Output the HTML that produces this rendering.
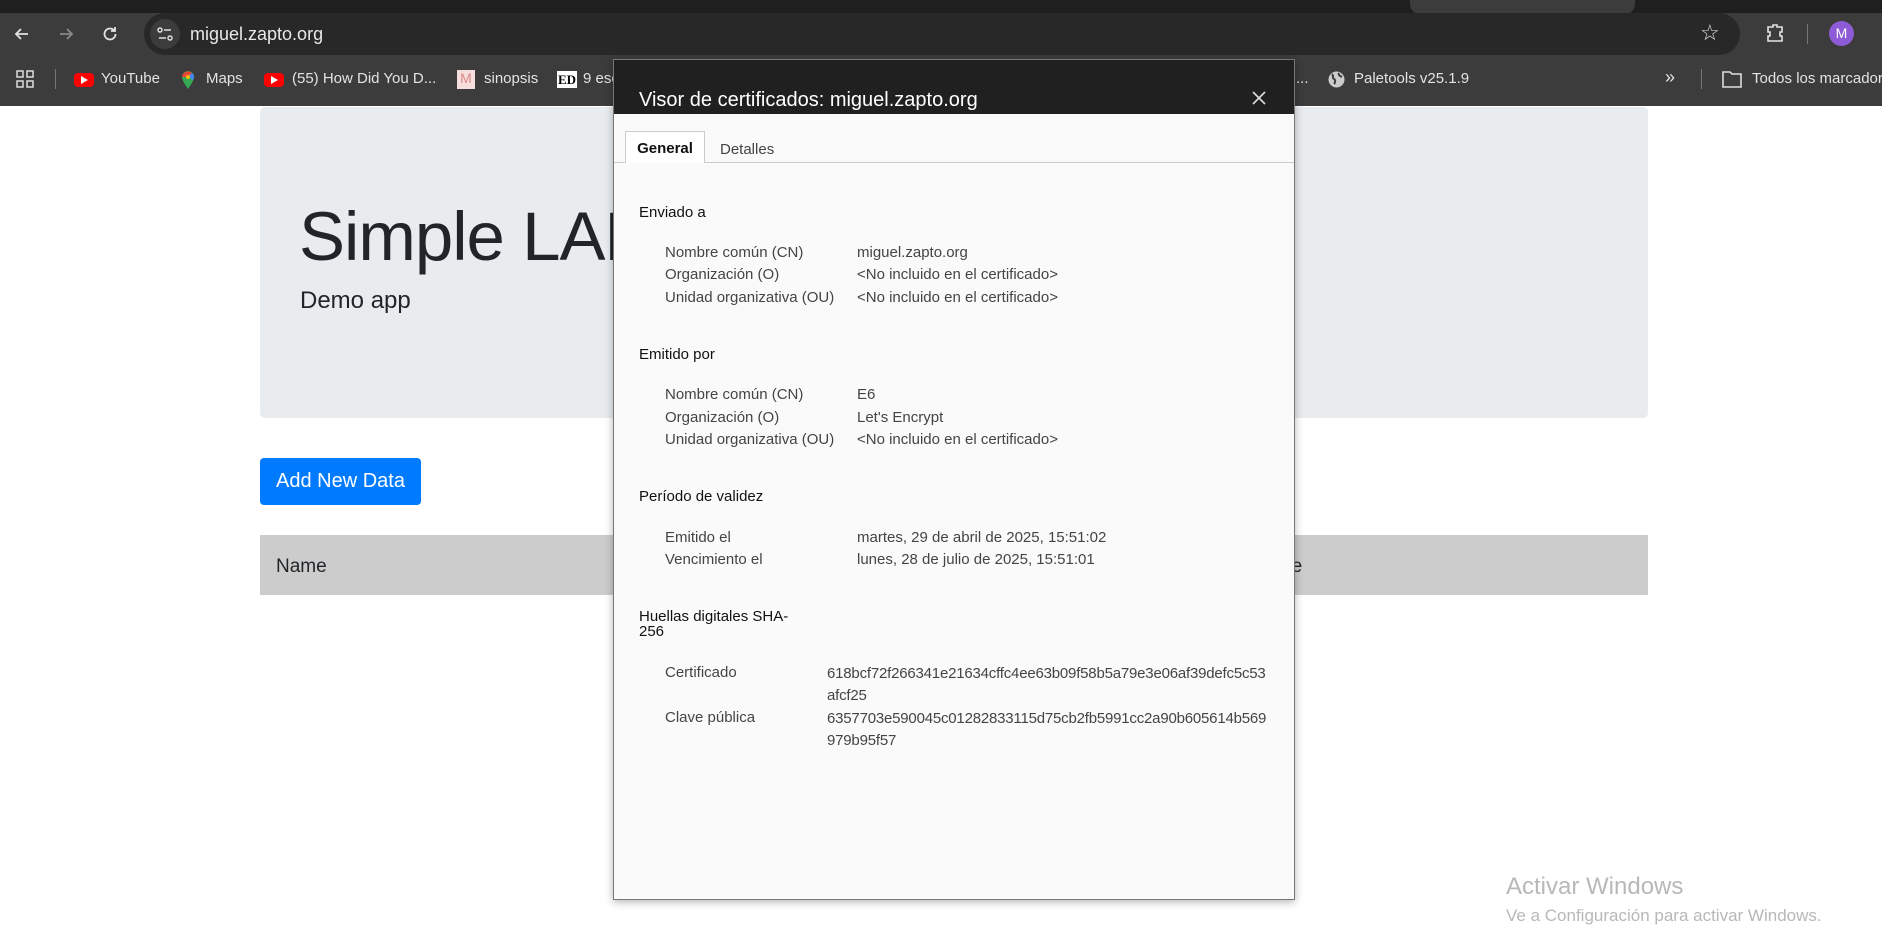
<!DOCTYPE html>
<html><head><meta charset="utf-8"><style>
*{margin:0;padding:0;box-sizing:border-box}
body{width:1882px;height:947px;overflow:hidden;background:#fff;font-family:"Liberation Sans",sans-serif;position:relative}
.a{position:absolute;white-space:nowrap}
.bm{position:absolute;top:70px;font-size:15px;color:#e3e3e3;white-space:nowrap}
.d{font-size:15px;color:#444}
.h{font-size:15px;color:#111}
</style></head><body>
<div class="a" style="left:0;top:0;width:1882px;height:14px;background:#1f1f1f"></div>
<div class="a" style="left:1410px;top:0;width:225px;height:14px;background:#3c3c3c;border-radius:0 0 10px 10px"></div>
<div class="a" style="left:0;top:13px;width:1882px;height:93px;background:#3c3c3c"></div>
<svg class="a" style="left:12px;top:24px" width="20" height="20" viewBox="0 0 20 20"><path d="M16 10H4M9 5l-5 5 5 5" stroke="#e3e3e3" stroke-width="1.8" fill="none"/></svg>
<svg class="a" style="left:56px;top:24px" width="20" height="20" viewBox="0 0 20 20"><path d="M4 10h12M11 5l5 5-5 5" stroke="#8a8a8a" stroke-width="1.8" fill="none"/></svg>
<svg class="a" style="left:100px;top:24px" width="20" height="20" viewBox="0 0 20 20"><path d="M15.5 10a5.5 5.5 0 1 1-1.6-3.9M15 3v4h-4" stroke="#e3e3e3" stroke-width="1.8" fill="none"/></svg>
<div class="a" style="left:144px;top:13px;width:1596px;height:42px;background:#282828;border-radius:21px"></div>
<div class="a" style="left:150px;top:19px;width:30px;height:30px;background:#3c3c3c;border-radius:15px"></div>
<svg class="a" style="left:156px;top:25px" width="18" height="18" viewBox="0 0 18 18"><circle cx="4" cy="5" r="2" stroke="#ddd" fill="none" stroke-width="1.5"/><path d="M8 5h7M3 13h7" stroke="#ddd" stroke-width="1.5"/><circle cx="14" cy="13" r="2" stroke="#ddd" fill="none" stroke-width="1.5"/></svg>
<div class="a" style="left:190px;top:24px;font-size:18px;color:#e8e8e8">miguel.zapto.org</div>
<div class="a" style="left:1700px;top:20px;font-size:22px;color:#e3e3e3">☆</div>
<svg class="a" style="left:1764px;top:22px" width="22" height="22" viewBox="0 0 22 22"><path d="M4 5h5V3h4v2h5v5h-2v4h2v5H4v-5h2v-4H4z" stroke="#e3e3e3" stroke-width="1.6" fill="none"/></svg>
<div class="a" style="left:1807px;top:24px;width:1px;height:20px;background:#777"></div>
<div class="a" style="left:1829px;top:21px;width:25px;height:25px;border-radius:50%;background:#8e5bd6;color:#fff;font-size:14px;text-align:center;line-height:25px">M</div>
<svg class="a" style="left:16px;top:70px" width="18" height="18" viewBox="0 0 18 18"><g stroke="#ddd" fill="none" stroke-width="1.5"><rect x="1" y="1" width="6" height="6"/><rect x="11" y="1" width="6" height="6"/><rect x="1" y="11" width="6" height="6"/><rect x="11" y="11" width="6" height="6"/></g></svg>
<div class="a" style="left:55px;top:69px;width:1px;height:20px;background:#777"></div>
<div class="a" style="left:74px;top:73px;width:20px;height:14px;background:#f00;border-radius:4px"></div><div class="a" style="left:81px;top:76px;width:0;height:0;border-left:7px solid #fff;border-top:4px solid transparent;border-bottom:4px solid transparent"></div>
<div class="bm" style="left:101px">YouTube</div>
<svg class="a" style="left:181px;top:70px" width="14" height="20" viewBox="0 0 14 20"><path d="M7 19C3 13 1 10 1 7a6 6 0 0 1 12 0c0 3-2 6-6 12z" fill="#34a853"/><path d="M1 7a6 6 0 0 1 10-4L7 7z" fill="#ea4335"/><path d="M13 7c0 1-.3 2-1 3L7 7l4-4a6 6 0 0 1 2 4z" fill="#4285f4"/><circle cx="7" cy="7" r="2" fill="#fbbc04"/></svg>
<div class="bm" style="left:206px">Maps</div>
<div class="a" style="left:264px;top:73px;width:20px;height:14px;background:#f00;border-radius:4px"></div><div class="a" style="left:271px;top:76px;width:0;height:0;border-left:7px solid #fff;border-top:4px solid transparent;border-bottom:4px solid transparent"></div>
<div class="bm" style="left:292px">(55) How Did You D...</div>
<div class="a" style="left:457px;top:70px;width:18px;height:19px;background:#f6dede"><div style="color:#d88;font-size:14px;text-align:center">M</div></div>
<div class="bm" style="left:484px">sinopsis</div>
<div class="a" style="left:557px;top:71px;width:20px;height:17px;background:#fff;color:#000;font:bold 13px 'Liberation Serif',serif;text-align:center;line-height:17px">ED</div>
<div class="bm" style="left:583px">9 esc</div>
<div class="bm" style="left:1296px">...</div>
<svg class="a" style="left:1327px;top:70px" width="19" height="19" viewBox="0 0 19 19"><circle cx="9.5" cy="9.5" r="8" fill="#ccc"/><path d="M5 4c2 2 0 4 2 5s1 4 0 5M12 3c-1 2 1 3 3 4" stroke="#3c3c3c" stroke-width="2" fill="none"/></svg>
<div class="bm" style="left:1354px">Paletools v25.1.9</div>
<div class="bm" style="left:1665px;font-size:18px;top:67px">»</div>
<div class="a" style="left:1701px;top:69px;width:1px;height:20px;background:#777"></div>
<svg class="a" style="left:1722px;top:71px" width="20" height="17" viewBox="0 0 20 17"><path d="M1 1h7l2 2h9v13H1z" stroke="#ddd" stroke-width="1.6" fill="none"/></svg>
<div class="bm" style="left:1752px">Todos los marcadores</div>
<div class="a" style="left:260px;top:107px;width:1388px;height:311px;background:#e9ecef;border-radius:5px"></div>
<div class="a" style="left:299px;top:197px;font-size:69px;font-weight:300;color:#212529;letter-spacing:-1px">Simple LAMP</div>
<div class="a" style="left:300px;top:287px;font-size:24px;color:#212529">Demo app</div>
<div class="a" style="left:260px;top:458px;width:161px;height:47px;background:#007bff;border-radius:4px;color:#fff;font-size:20px;text-align:center;line-height:47px">Add New Data</div>
<div class="a" style="left:260px;top:535px;width:1388px;height:60px;background:#ccc"></div>
<div class="a" style="left:276px;top:556px;font-size:19px;color:#212529">Name</div>
<div class="a" style="left:1262px;top:556px;font-size:19px;color:#212529">Date</div>
<div class="a" style="left:1506px;top:873px;font-size:24px;color:#b8b8b8">Activar Windows</div>
<div class="a" style="left:1506px;top:906px;font-size:17px;color:#b8b8b8">Ve a Configuración para activar Windows.</div>
<div class="a" style="left:613px;top:59px;width:682px;height:841px;background:#fafafa;border:1px solid #777;box-shadow:0 2px 8px rgba(0,0,0,.3)">
<div class="a" style="left:0;top:0;width:680px;height:54px;background:#202020"></div>
<div class="a" style="left:25px;top:29px;font-size:20px;color:#fff">Visor de certificados: miguel.zapto.org</div>
<svg class="a" style="left:638px;top:31px" width="14" height="14" viewBox="0 0 14 14"><path d="M1 1l12 12M13 1L1 13" stroke="#ddd" stroke-width="1.6"/></svg>
<div class="a" style="left:0;top:102px;width:680px;height:1px;background:#ccc"></div>
<div class="a" style="left:11px;top:71px;width:80px;height:32px;background:#fff;border:1px solid #ccc;border-bottom:none;font-size:15px;font-weight:bold;color:#111;text-align:center;line-height:34px">General</div>
<div class="a" style="left:106px;top:81px;font-size:15px;color:#444">Detalles</div>
<div class="a h" style="left:25px;top:144px">Enviado a</div>
<div class="a d" style="left:51px;top:184px">Nombre común (CN)</div><div class="a d" style="left:243px;top:184px">miguel.zapto.org</div>
<div class="a d" style="left:51px;top:206px">Organización (O)</div><div class="a d" style="left:243px;top:206px">&lt;No incluido en el certificado&gt;</div>
<div class="a d" style="left:51px;top:229px">Unidad organizativa (OU)</div><div class="a d" style="left:243px;top:229px">&lt;No incluido en el certificado&gt;</div>
<div class="a h" style="left:25px;top:286px">Emitido por</div>
<div class="a d" style="left:51px;top:326px">Nombre común (CN)</div><div class="a d" style="left:243px;top:326px">E6</div>
<div class="a d" style="left:51px;top:349px">Organización (O)</div><div class="a d" style="left:243px;top:349px">Let's Encrypt</div>
<div class="a d" style="left:51px;top:371px">Unidad organizativa (OU)</div><div class="a d" style="left:243px;top:371px">&lt;No incluido en el certificado&gt;</div>
<div class="a h" style="left:25px;top:428px">Período de validez</div>
<div class="a d" style="left:51px;top:469px">Emitido el</div><div class="a d" style="left:243px;top:469px">martes, 29 de abril de 2025, 15:51:02</div>
<div class="a d" style="left:51px;top:491px">Vencimiento el</div><div class="a d" style="left:243px;top:491px">lunes, 28 de julio de 2025, 15:51:01</div>
<div class="a h" style="left:25px;top:549px;line-height:15px">Huellas digitales SHA-<br>256</div>
<div class="a d" style="left:51px;top:604px">Certificado</div><div class="a d" style="left:213px;top:603px;line-height:22px;letter-spacing:-0.2px">618bcf72f266341e21634cffc4ee63b09f58b5a79e3e06af39defc5c53<br>afcf25</div>
<div class="a d" style="left:51px;top:649px">Clave pública</div><div class="a d" style="left:213px;top:648px;line-height:22px;letter-spacing:-0.2px">6357703e590045c01282833115d75cb2fb5991cc2a90b605614b569<br>979b95f57</div>
</div>
</body></html>
